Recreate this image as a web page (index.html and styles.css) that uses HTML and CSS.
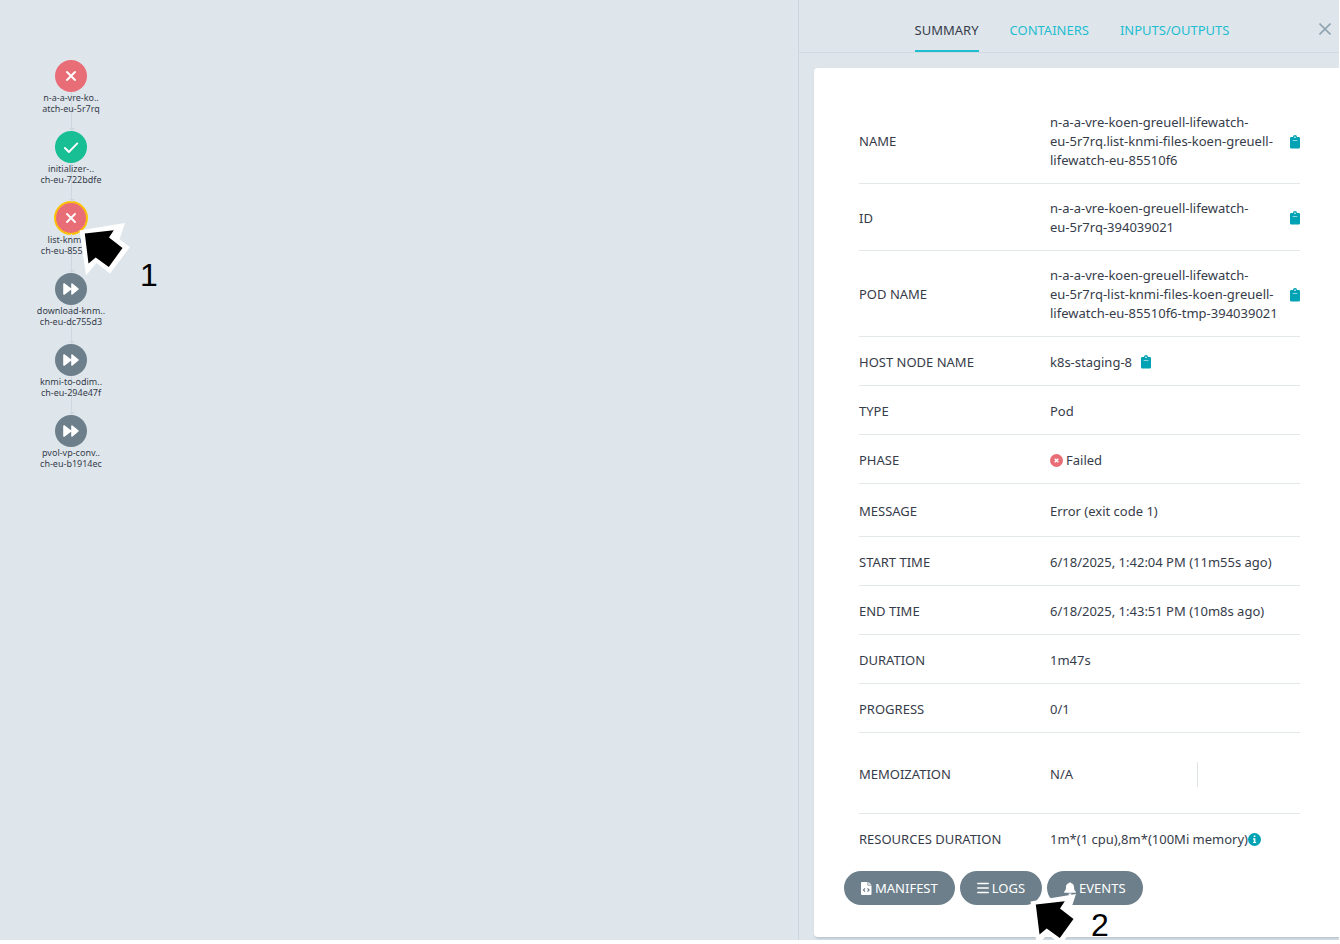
FILE: index.html
```html
<!DOCTYPE html>
<html lang="en">
<head>
<meta charset="utf-8">
<title>Workflow details</title>
<link rel="stylesheet" href="styles.css">
</head>
<body>
<svg class="defs" aria-hidden="true">
  <symbol id="cross" viewBox="0 0 32 32"><path d="M12 12l8 8M20 12l-8 8" fill="none" stroke="#fff" stroke-width="1.9" stroke-linecap="round"/></symbol>
  <symbol id="check" viewBox="0 0 32 32"><path d="M9.9 17l4 4 8.400-8.600" fill="none" stroke="#fff" stroke-width="1.9" stroke-linecap="round" stroke-linejoin="round"/></symbol>
  <symbol id="forward" viewBox="0 0 32 32"><path d="M9 11l6.500 5-6.500 5zM17 11l6 5-6 5z" fill="#fff" stroke="#fff" stroke-width="1.600" stroke-linejoin="round"/></symbol>
  <symbol id="clipboard" viewBox="0 0 10 14"><path fill="#00a2b3" d="M1.200 2H3a2 2 0 0 1 4 0h1.800A1.200 1.200 0 0 1 10 3.200v9.100a1.200 1.200 0 0 1-1.200 1.200H1.200A1.200 1.200 0 0 1 0 12.300V3.200A1.200 1.200 0 0 1 1.200 2z"/><circle cx="5" cy="2.300" r=".8" fill="#fff"/><path d="M2.600 5.400h4.800" stroke="#fff" stroke-width=".8" opacity=".8"/></symbol>
  <symbol id="pointer" viewBox="0 0 54 56"><path fill="#fff" d="M2.500 3.500L48 -4 42.500 12.500 53 20 33 46.500 19.500 36 9 48.500z" transform="translate(0 6)"/><path fill="#000" d="M7.800 12.500L36.800 9.200 32 16.600 45.500 27 31.800 46 18.700 36.600 11.500 42.600z"/></symbol>
</svg>
<div class="app">
  <main class="canvas">
    <div class="graph">
      <button class="node"><span class="dot failed"><svg><use href="#cross"/></svg></span><span class="label">n-a-a-vre-ko..<br>atch-eu-5r7rq</span></button>
      <button class="node"><span class="dot succeeded"><svg><use href="#check"/></svg></span><span class="label">initializer-..<br>ch-eu-722bdfe</span></button>
      <button class="node"><span class="dot failed selected"><svg><use href="#cross"/></svg></span><span class="label">list-knmi-f..<br>ch-eu-85510f6</span></button>
      <button class="node"><span class="dot skipped"><svg><use href="#forward"/></svg></span><span class="label">download-knm..<br>ch-eu-dc755d3</span></button>
      <button class="node"><span class="dot skipped"><svg><use href="#forward"/></svg></span><span class="label">knmi-to-odim..<br>ch-eu-294e47f</span></button>
      <button class="node"><span class="dot skipped"><svg><use href="#forward"/></svg></span><span class="label">pvol-vp-conv..<br>ch-eu-b1914ec</span></button>
    </div>
    <div class="callout callout-one"><svg><use href="#pointer"/></svg><span>1</span></div>
  </main>
  <aside class="panel">
    <header class="panel-head">
      <nav class="tabs">
        <a href="#summary" class="tab active">SUMMARY</a>
        <a href="#containers" class="tab">CONTAINERS</a>
        <a href="#io" class="tab">INPUTS/OUTPUTS</a>
      </nav>
      <button class="close" aria-label="Close"><svg viewBox="0 0 12 12"><path d="M.5 .5l11 11M11.500 .5l-11 11" stroke="#8fa4b1" stroke-width="1.600" fill="none"/></svg></button>
    </header>
    <section class="card" id="summary">
      <dl class="props">
        <div class="row"><dt>NAME</dt><dd class="spread"><span>n-a-a-vre-koen-greuell-lifewatch-<wbr>eu&#8209;5r7rq.list-knmi-files-koen-greuell-lifewatch-eu-85510f6</span><button class="copy" aria-label="Copy name"><svg><use href="#clipboard"/></svg></button></dd></div>
        <div class="row"><dt>ID</dt><dd class="spread"><span>n-a-a-vre-koen-greuell-lifewatch-<wbr>eu&#8209;5r7rq-394039021</span><button class="copy" aria-label="Copy ID"><svg><use href="#clipboard"/></svg></button></dd></div>
        <div class="row"><dt>POD NAME</dt><dd class="spread"><span>n-a-a-vre-koen-greuell-lifewatch-<wbr>eu&#8209;5r7rq-list-knmi-files-koen-greuell-lifewatch-eu-85510f6-tmp-394039021</span><button class="copy" aria-label="Copy pod name"><svg><use href="#clipboard"/></svg></button></dd></div>
        <div class="row"><dt>HOST NODE NAME</dt><dd class="inline"><span>k8s-staging-8</span><button class="copy" aria-label="Copy host node name"><svg><use href="#clipboard"/></svg></button></dd></div>
        <div class="row"><dt>TYPE</dt><dd>Pod</dd></div>
        <div class="row"><dt>PHASE</dt><dd class="phase"><svg class="badge" viewBox="0 0 13 13"><circle cx="6.500" cy="6.500" r="6.500" fill="#e96d76"/><path d="M4.700 4.700l3.600 3.600M8.300 4.700L4.700 8.300" stroke="#fff" stroke-width="1.400"/></svg>Failed</dd></div>
        <div class="row medium"><dt>MESSAGE</dt><dd>Error (exit code 1)</dd></div>
        <div class="row"><dt>START TIME</dt><dd>6/18/2025, 1:42:04 PM (11m55s ago)</dd></div>
        <div class="row"><dt>END TIME</dt><dd>6/18/2025, 1:43:51 PM (10m8s ago)</dd></div>
        <div class="row"><dt>DURATION</dt><dd>1m47s</dd></div>
        <div class="row"><dt>PROGRESS</dt><dd>0/1</dd></div>
        <div class="row tall"><dt>MEMOIZATION</dt><dd class="split"><span>N/A</span><span class="cell"></span></dd></div>
        <div class="row"><dt>RESOURCES DURATION</dt><dd class="resources">1m*(1 cpu),8m*(100Mi memory)<svg class="badge" viewBox="0 0 13 13"><circle cx="6.500" cy="6.500" r="6.500" fill="#00a2b3"/><path d="M5.700 2.500h1.700v1.600H5.700zM5 5.300h2.400v3.600h.8v1.200H5V8.900h.8V6.400H5z" fill="#fff"/></svg></dd></div>
      </dl>
      <div class="actions">
        <button class="action"><svg width="11" height="13" viewBox="0 0 11 13"><path fill="#fff" d="M1 0h5.500v3.500H10.500V12a1 1 0 0 1-1 1H1a1 1 0 0 1-1-1V1a1 1 0 0 1 1-1zM7.300 0L10.500 2.800H7.300z"/><path d="M4 6.300L2.400 8 4 9.700M6.500 6.300L8.100 8 6.500 9.700" fill="none" stroke="#6d7f8b" stroke-width="1.200"/></svg>MANIFEST</button>
        <button class="action"><svg width="12" height="12" viewBox="0 0 12 12"><path d="M.8 1.500h10.400M.8 6h10.400M.8 10.500h10.400" stroke="#fff" stroke-width="1.700" stroke-linecap="round"/></svg>LOGS</button>
        <button class="action"><svg width="12" height="13" viewBox="0 0 12 13"><path fill="#fff" d="M5.200 1a.8.8 0 0 1 1.600 0C8.900 1.400 10 3 10 5c0 2.400.6 3.400 1.700 4.400.6.600.3 1.300-.4 1.300H.7C0 10.700-.3 10 .3 9.400 1.400 8.400 2 7.400 2 5c0-2 1.100-3.600 3.200-4zM4.400 11.400h3.200a1.600 1.600 0 0 1-3.200 0z"/></svg>EVENTS</button>
        <div class="callout callout-two"><svg><use href="#pointer"/></svg><span>2</span></div>
      </div>
    </section>
  </aside>
</div>
</body>
</html>
```
FILE: styles.css
```css
* {
  box-sizing: border-box;
}

body {
  margin: 0;
  background: #fff;
  color: #363c4a;
  font: 13px/19px "Noto Sans", sans-serif;
}

button {
  padding: 0;
  border: 0;
  background: none;
  color: inherit;
  font: inherit;
}

.defs {
  position: absolute;
  width: 0;
  height: 0;
}

.app {
  display: flex;
  min-height: calc(100vh - 4px);
  margin: 0 1px 4px 0;
  background: #dee6ec;
  overflow: hidden;
}

.canvas {
  position: relative;
  flex: 1;
  padding: 60px 31px;
}

.graph {
  display: flex;
  flex-direction: column;
  align-items: flex-start;
  gap: 17px;
}

.node {
  position: relative;
  display: flex;
  flex-direction: column;
  align-items: center;
  width: 80px;
}

.node + .node::before {
  content: "";
  position: absolute;
  bottom: 100%;
  left: 40px;
  width: 1px;
  height: 39px;
  background: #d0d8df;
}

.node + .node::after {
  content: "";
  position: absolute;
  bottom: 100%;
  left: 38px;
  border: solid transparent;
  border-width: 3px 3px 0;
  border-top-color: #d0d8df;
}

.dot {
  position: relative;
  display: block;
  width: 32px;
  height: 32px;
  border-radius: 50%;
}

.dot svg {
  display: block;
  width: 32px;
  height: 32px;
}

.failed {
  background: #e96d76;
}

.succeeded {
  background: #18be94;
}

.skipped {
  background: #6d7f8b;
}

.selected {
  box-shadow: inset 0 0 0 1px #ffc800, 0 0 0 1px #ffc800;
}

.label {
  position: relative;
  z-index: 1;
  font-size: 9px;
  line-height: 11px;
  white-space: nowrap;
}

.callout {
  position: absolute;
  z-index: 2;
  display: flex;
  align-items: flex-start;
  gap: 9px;
  color: #000;
  font: 32px/24px "Liberation Sans", Arial, sans-serif;
}

.callout svg {
  width: 54px;
  height: 56px;
}

.callout-one {
  top: 221px;
  left: 77px;
}

.callout-one span {
  margin-top: 42px;
}

.callout-two {
  top: 21px;
  left: 184px;
}

.callout-two span {
  margin-top: 21px;
}

.panel {
  display: flex;
  flex-direction: column;
  width: 541px;
  border-left: 1px solid #ccd6de;
}

.panel-head {
  display: flex;
  align-items: flex-start;
  height: 53px;
  padding-right: 8px;
  border-bottom: 1px solid #d0d9e0;
}

.tabs {
  display: flex;
  flex: 1;
  justify-content: center;
  gap: 31px;
  padding-left: 26px;
}

.tab {
  height: 52px;
  padding-top: 21px;
  border-bottom: 2px solid transparent;
  color: #1fbdd0;
  text-decoration: none;
}

.tab.active {
  border-bottom-color: #1fbdd0;
  color: #363c4a;
}

.close {
  margin-top: 23px;
}

.close svg {
  display: block;
  width: 12px;
  height: 12px;
}

.card {
  flex: 1;
  margin: 15px 0 3px 15px;
  padding: 30px 39px 32px 30px;
  border-radius: 4px 0 0 4px;
  background: #fff;
  box-shadow: 1px 2px 3px #bcc6cd;
}

.props {
  margin: 0 0 0 15px;
}

.row {
  display: grid;
  grid-template-columns: 191px 1fr;
  align-items: center;
  min-height: 49px;
  padding: 15px 0 13px;
  border-bottom: 1px solid #e3e8eb;
}

.row:last-child {
  border-bottom: 0;
}

.medium {
  min-height: 53px;
}

.tall {
  min-height: 81px;
}

dd {
  display: flex;
  align-items: center;
  margin: 0;
}

.spread {
  justify-content: space-between;
}

.inline {
  gap: 9px;
}

.phase {
  gap: 3px;
}

.copy svg {
  display: block;
  width: 10px;
  height: 14px;
}

.badge {
  width: 13px;
  height: 13px;
}

.split span {
  flex: 1;
}

.split .cell {
  flex: 0 0 103px;
  height: 25px;
  border-left: 1px solid #dee3e6;
}

.actions {
  position: relative;
  display: flex;
  gap: 5px;
  margin-top: 8px;
}

.action {
  display: flex;
  align-items: center;
  gap: 3px;
  height: 34px;
  padding: 0 17px;
  border-radius: 17px;
  background: #6d7f8b;
  color: #fff;
}
```
